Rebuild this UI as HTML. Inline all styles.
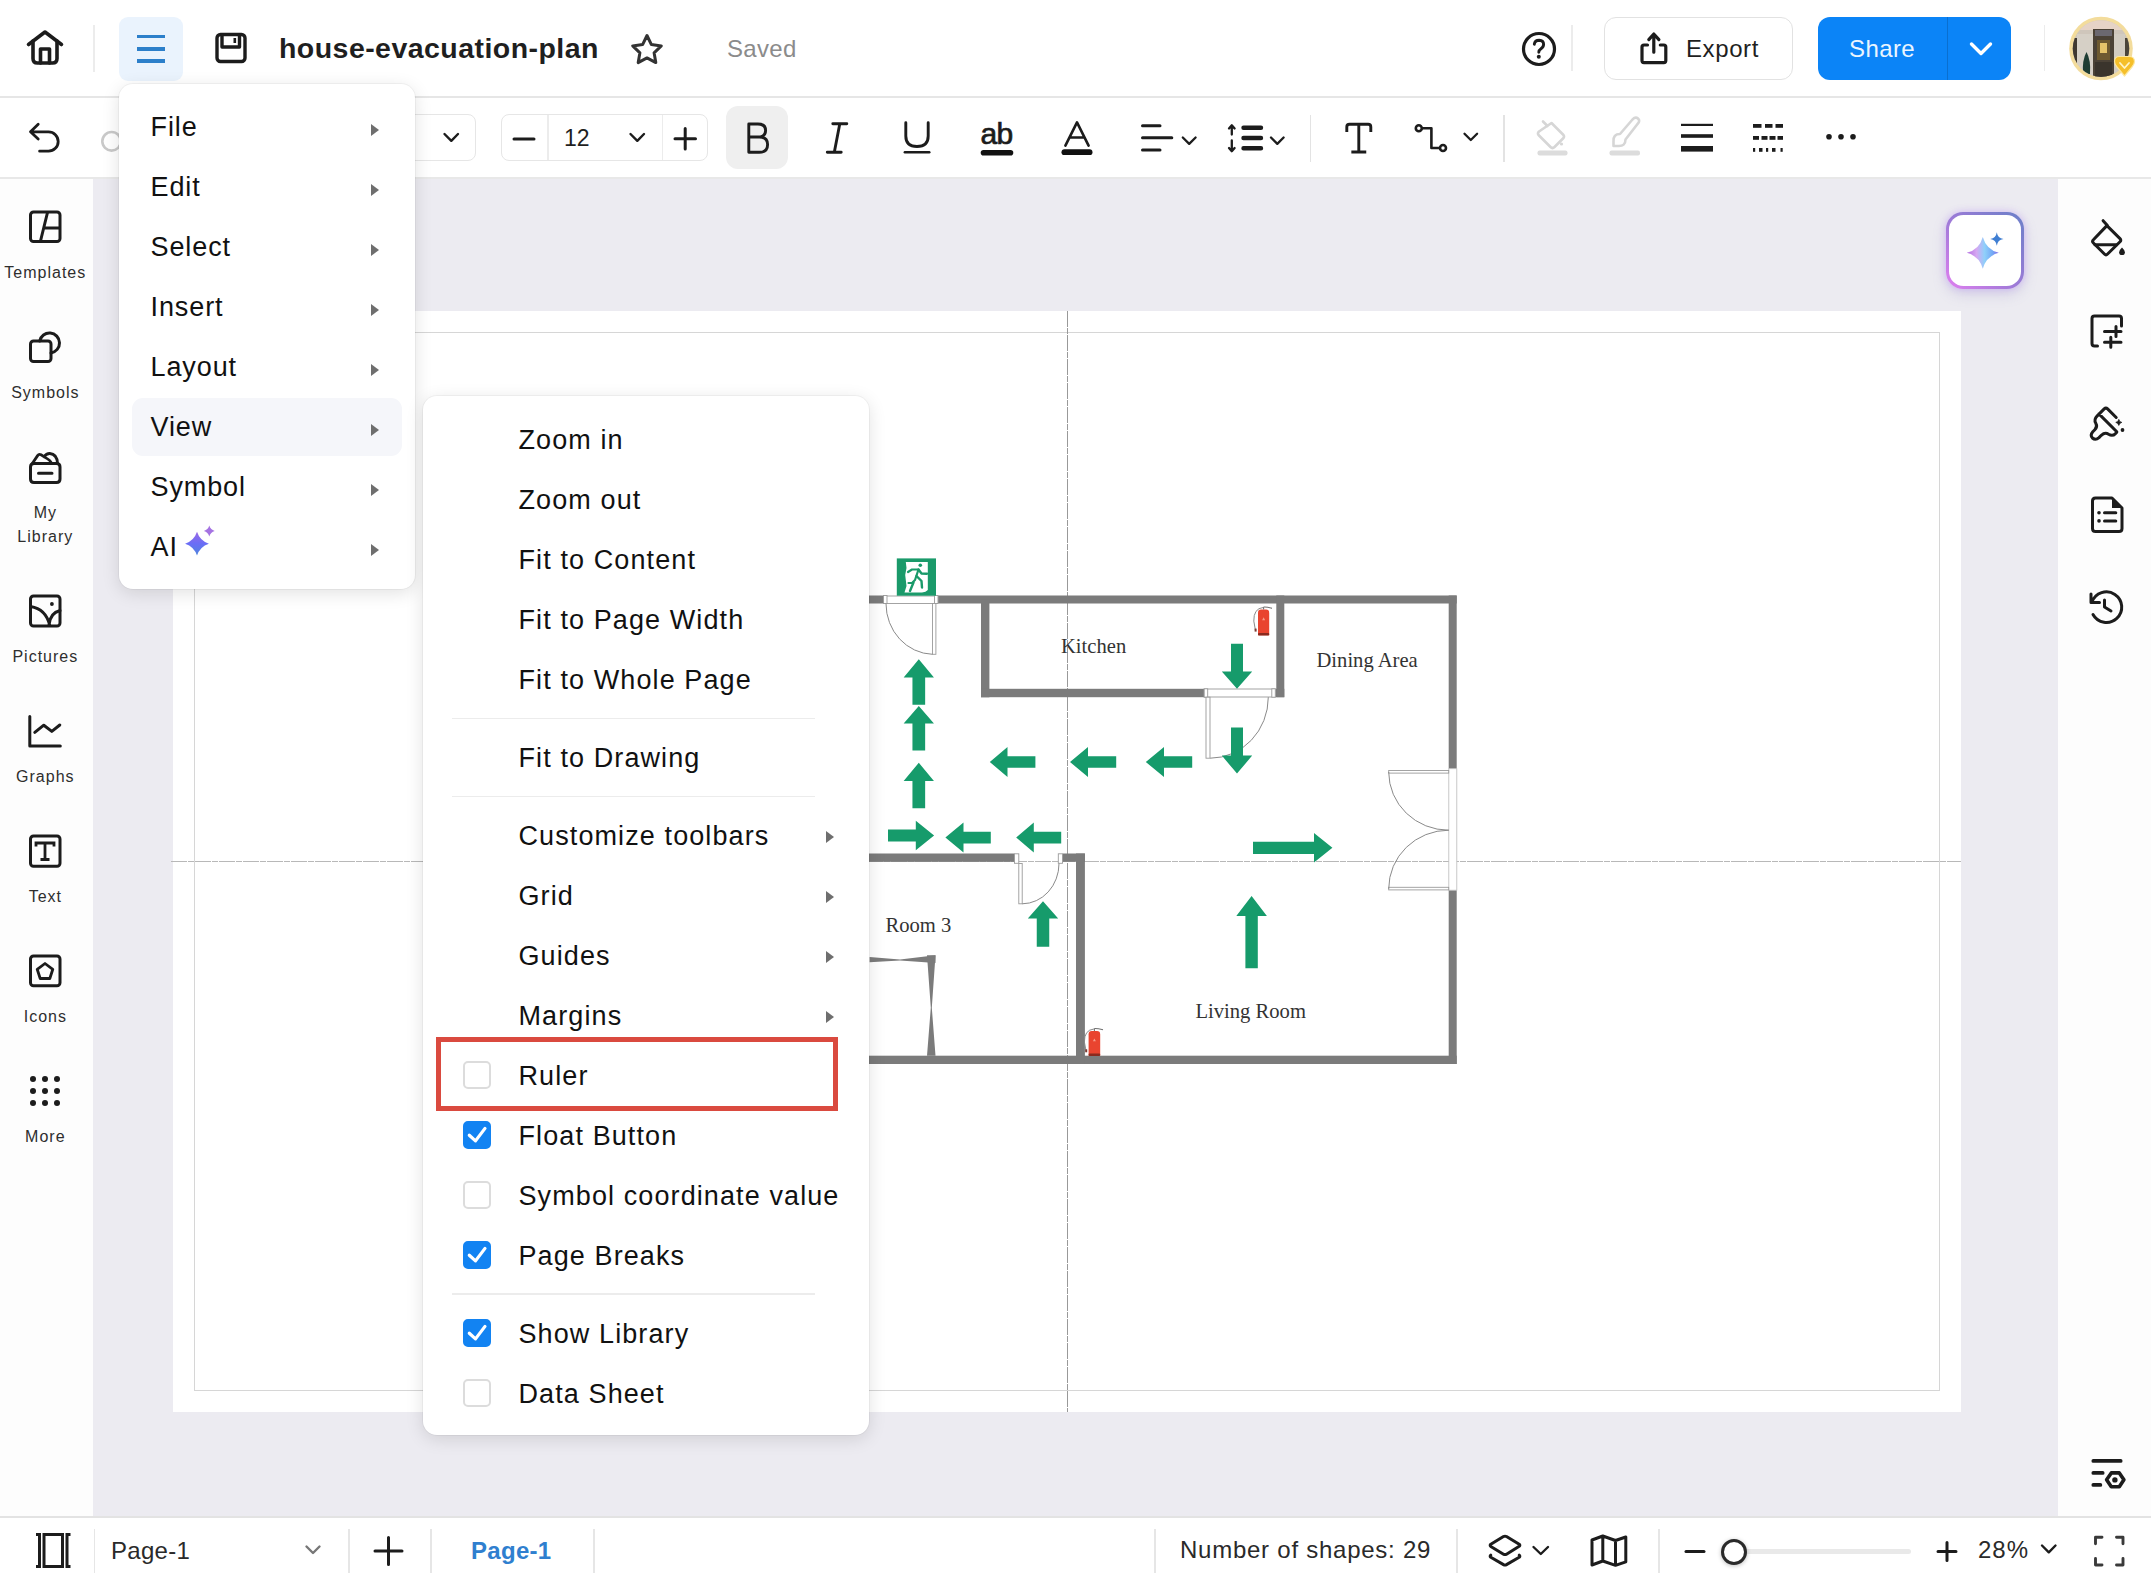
<!DOCTYPE html>
<html><head><meta charset="utf-8">
<style>
*{margin:0;padding:0;box-sizing:border-box}
html,body{width:2151px;height:1573px;overflow:hidden;background:#fff;font-family:"Liberation Sans",sans-serif;color:#1a1a1a}
.abs{position:absolute}
svg{position:absolute;overflow:visible}
.t{position:absolute;white-space:nowrap;line-height:1}
#topbar{position:absolute;left:0;top:0;width:2151px;height:98px;background:#fff;border-bottom:2px solid #e6e6e6}
#toolbar{position:absolute;left:0;top:98px;width:2151px;height:81px;background:#fff;border-bottom:2px solid #e8e8e8}
#leftbar{position:absolute;left:0;top:179px;width:93px;height:1338px;background:#fdfdfd}
#rightbar{position:absolute;left:2058px;top:179px;width:93px;height:1338px;background:#fdfdfd}
#canvas{position:absolute;left:93px;top:179px;width:1965px;height:1338px;background:#ecebf1}
#bottombar{position:absolute;left:0;top:1516px;width:2151px;height:57px;background:#fff;border-top:2px solid #e3e3e3}
.vsep{position:absolute;width:2px;background:#e8e8e8}
.menu{position:absolute;background:#fff;border-radius:14px;box-shadow:0 4px 18px rgba(0,0,0,0.12),0 0 0 1px rgba(0,0,0,0.04)}
.mi{position:absolute;font-size:27px;color:#111;line-height:1}
.arr{position:absolute;width:0;height:0;border-top:6px solid transparent;border-bottom:6px solid transparent;border-left:8px solid #6e6e6e}
.cb{position:absolute;width:28px;height:28px;border:2px solid #dcdcdc;border-radius:5px;background:#fff}
.cb.on{background:#1283f2;border-color:#1283f2}
.sep{position:absolute;height:2px;background:#ececec}
.lbl{position:absolute;font-size:16px;color:#2e2e2e;text-align:center;width:93px;left:-1.2px;line-height:24px;letter-spacing:1px}
</style></head>
<body>
<div id="topbar"></div>
<div id="toolbar"></div>
<div id="canvas"></div>
<div id="leftbar"></div>
<div id="rightbar"></div>
<div id="bottombar"></div>


<!-- TOPBAR -->
<svg style="left:0;top:0" width="1" height="1">
 <g fill="none" stroke="#1c1c1c" stroke-width="3.6" stroke-linejoin="round" stroke-linecap="round">
  <path d="M28.5 44.5 L45 32 L61.5 44.5"/>
  <path d="M33 41 V58.5 Q33 63 37.5 63 H52.5 Q57 63 57 58.5 V41"/>
  <path d="M40.5 63 V49 H49.5 V63"/>
 </g>
</svg>
<div class="vsep" style="left:93px;top:25px;height:47px;width:1.5px;background:#ececec"></div>
<div class="abs" style="left:119px;top:17px;width:64px;height:64px;border-radius:9px;background:#eaf3fd"></div>
<div class="abs" style="left:137px;top:34.8px;width:28px;height:3.6px;background:#2c7fca"></div>
<div class="abs" style="left:137px;top:47px;width:28px;height:3.6px;background:#2c7fca"></div>
<div class="abs" style="left:137px;top:59px;width:28px;height:3.6px;background:#2c7fca"></div>
<svg style="left:0;top:0" width="1" height="1">
 <g fill="none" stroke="#1c1c1c" stroke-width="3.4" stroke-linejoin="round">
  <rect x="217" y="34.5" width="28" height="27" rx="3.5"/>
  <path d="M222 34.5 V47 H239.5 V34.5"/>
 </g>
 <rect x="233.5" y="38" width="2.6" height="5" fill="#1c1c1c"/>
</svg>
<div class="t" style="left:279px;top:33.5px;font-size:28.5px;font-weight:bold;color:#1f1f1f;letter-spacing:0.45px">house-evacuation-plan</div>
<svg style="left:0;top:0" width="1" height="1">
 <path d="M647 35.5 L651.4 44.6 L661.3 45.9 L654.1 52.8 L655.8 62.6 L647 57.9 L638.2 62.6 L639.9 52.8 L632.7 45.9 L642.6 44.6 Z" fill="none" stroke="#333" stroke-width="3" stroke-linejoin="round"/>
</svg>
<div class="t" style="left:727px;top:37px;font-size:24px;color:#8b8b8b;letter-spacing:0.3px">Saved</div>

<svg style="left:0;top:0" width="1" height="1">
 <circle cx="1539" cy="49" r="15.5" fill="none" stroke="#1c1c1c" stroke-width="3.2"/>
 <path d="M1534.3 44.2 Q1534.8 40.2 1539.2 40.2 Q1543.6 40.3 1543.6 44.3 Q1543.6 47 1541 48.7 Q1538.8 50.2 1538.8 52.3" fill="none" stroke="#1c1c1c" stroke-width="2.9" stroke-linecap="round"/>
 <circle cx="1538.8" cy="56.8" r="2" fill="#1c1c1c"/>
</svg>
<div class="vsep" style="left:1571px;top:25px;height:46px;width:1.5px;background:#ececec"></div>
<div class="abs" style="left:1604px;top:17px;width:189px;height:63px;border:1.5px solid #e2e2e2;border-radius:12px;background:#fff"></div>
<svg style="left:0;top:0" width="1" height="1">
 <g fill="none" stroke="#1c1c1c" stroke-width="3.2" stroke-linecap="round" stroke-linejoin="round">
  <path d="M1647.5 45 H1644 Q1642 45 1642 47 V60.5 Q1642 62.6 1644 62.6 H1663.8 Q1665.8 62.6 1665.8 60.5 V47 Q1665.8 45 1663.8 45 H1660.3"/>
  <path d="M1653.8 52.2 V34.2 M1648.8 39.6 L1653.8 34 L1658.9 39.6"/>
 </g>
</svg>
<div class="t" style="left:1686px;top:37px;font-size:24px;color:#1f1f1f;letter-spacing:0.6px">Export</div>
<div class="abs" style="left:1818px;top:17px;width:193px;height:63px;border-radius:12px;background:#0b84f7"></div>
<div class="abs" style="left:1946.5px;top:17px;width:1.5px;height:63px;background:#0a6fd0"></div>
<div class="t" style="left:1849px;top:37px;font-size:24px;color:#eaf5ff;letter-spacing:0.4px">Share</div>
<svg style="left:0;top:0" width="1" height="1">
 <path d="M1971.5 44 L1981 53.5 L1990.5 44" fill="none" stroke="#fff" stroke-width="3.4" stroke-linecap="round" stroke-linejoin="round"/>
</svg>
<div class="vsep" style="left:2043.5px;top:25px;height:46px;width:1.5px;background:#ececec"></div>
<svg style="left:0;top:0" width="1" height="1">
 <defs>
  <clipPath id="av"><circle cx="2101" cy="48.5" r="28.3"/></clipPath>
 </defs>
 <circle cx="2101" cy="48.5" r="31.8" fill="#f3dc9c"/>
 <g clip-path="url(#av)">
  <rect x="2068" y="16" width="66" height="66" fill="#cfc6bb"/>
  <rect x="2068" y="16" width="66" height="14" fill="#e6d3c6"/>
  <rect x="2068" y="38" width="9" height="44" fill="#3f3830"/>
  <rect x="2125" y="38" width="9" height="44" fill="#4a443a"/>
  <rect x="2077" y="34" width="16" height="46" fill="#d6d0c6"/>
  <rect x="2110" y="34" width="15" height="46" fill="#d2ccc2"/>
  <rect x="2093" y="29" width="21" height="50" fill="#4b4236"/>
  <rect x="2095" y="30" width="17" height="6" fill="#6b6870"/>
  <rect x="2097" y="40" width="13" height="20" fill="#6e5a30"/>
  <rect x="2100" y="43" width="7" height="10" fill="#e5c46a"/>
  <rect x="2095" y="62" width="17" height="14" fill="#3a342c"/>
  <path d="M2083 74 Q2082 60 2086.5 52 Q2091 60 2090 74 Z" fill="#1f3d33"/>
  <rect x="2068" y="76" width="66" height="6" fill="#2e2b28"/>
 </g>
 <path d="M2114.5 61.5 Q2114.5 56.5 2119.5 56.5 L2129 56.5 Q2134.5 56.5 2134.5 61.5 Q2134.5 64 2132 67 L2124.5 76 L2117 67 Q2114.5 64 2114.5 61.5 Z" fill="#f5bf2a" stroke="#fde7a0" stroke-width="1.2" stroke-linejoin="round"/>
 <path d="M2120 63 L2124.5 68 L2129 63" fill="none" stroke="#fff4c8" stroke-width="1.8" stroke-linecap="round" stroke-linejoin="round"/>
</svg>


<!-- TOOLBAR -->
<svg style="left:0;top:0" width="1" height="1">
 <g fill="none" stroke="#1c1c1c" stroke-width="2.8" stroke-linecap="round" stroke-linejoin="round">
  <path d="M38.2 124.3 L30.5 131.8 L38.2 139.1 M30.5 131.8 H48.5 A9.7 9.7 0 0 1 48.5 151.2 H39.6"/>
 </g>
 <circle cx="111.6" cy="141.3" r="9.3" fill="none" stroke="#c9c9c9" stroke-width="2.6"/>
</svg>
<div class="abs" style="left:380px;top:114px;width:96px;height:47px;border:1.5px solid #e6e6e6;border-radius:8px;background:#fff"></div>
<div class="abs" style="left:501px;top:114px;width:207px;height:47px;border:1.5px solid #e6e6e6;border-radius:8px;background:#fff"></div>
<div class="abs" style="left:547px;top:115px;width:1.5px;height:45px;background:#ececec"></div>
<div class="abs" style="left:661.5px;top:115px;width:1.5px;height:45px;background:#ececec"></div>
<div class="t" style="left:564px;top:127px;font-size:23px;color:#1f1f1f">12</div>
<svg style="left:0;top:0" width="1" height="1">
 <g fill="none" stroke="#1c1c1c" stroke-width="2.4" stroke-linecap="round" stroke-linejoin="round">
  <path d="M444.5 134 L451.3 140.8 L458 134"/>
  <path d="M630.5 134 L637.3 140.8 L644 134"/>
 </g>
 <g fill="none" stroke="#1c1c1c" stroke-width="3" stroke-linecap="round">
  <path d="M514 139 H534"/>
  <path d="M675 138.8 H695.5 M685.2 128.5 V149"/>
 </g>
</svg>
<div class="abs" style="left:726px;top:106px;width:62px;height:63px;border-radius:12px;background:#efefef"></div>
<svg style="left:0;top:0" width="1" height="1">
 <g fill="none" stroke="#1c1c1c" stroke-width="2.9" stroke-linecap="round" stroke-linejoin="round">
  <!-- B -->
  <path d="M748.8 124 V152.3 H759.3 Q767.6 152.3 767.6 144.6 Q767.6 137 759.3 137 H748.8 M748.8 124 H757.8 Q765.6 124 765.6 130.5 Q765.6 137 757.8 137"/>
  <!-- I -->
  <path d="M832.8 123.8 H846.8 M827.3 152.3 H841.2 M839.8 123.8 L834.3 152.3"/>
  <!-- U -->
  <path d="M905.8 122.8 V136 Q905.8 146.5 917 146.5 Q928.2 146.5 928.2 136 V122.8"/>
  <path d="M904.8 152.3 H929.3" stroke-width="2.4"/>
  <!-- A -->
  <path d="M1065.4 145.7 L1077 122.3 L1088.6 145.7 M1069.6 137.5 H1084.4" stroke-width="2.6"/>
 </g>
 <path d="M983.5 152.8 H1010.5" stroke="#111" stroke-width="5.6" stroke-linecap="round"/>
 <path d="M1064.4 152.2 H1089.6" stroke="#111" stroke-width="5.8" stroke-linecap="round"/>
</svg>
<div class="t" style="left:980.5px;top:119px;font-size:30px;color:#1c1c1c;letter-spacing:-0.6px;-webkit-text-stroke:0.7px #1c1c1c">ab</div>
<svg style="left:0;top:0" width="1" height="1">
 <g fill="none" stroke="#1c1c1c" stroke-width="3" stroke-linecap="round" stroke-linejoin="round">
  <path d="M1142.5 125.8 H1160 M1142.5 137.8 H1171.8 M1142.5 150 H1160"/>
  <path d="M1182.8 137.5 L1189.2 143.9 L1195.6 137.5" stroke-width="2.3"/>
  <path d="M1271 137.5 L1277.3 143.9 L1283.6 137.5" stroke-width="2.3"/>
  <path d="M1464.5 133.7 L1470.8 140 L1477.1 133.7" stroke-width="2.3"/>
  <path d="M1231.8 125.5 V134.5 M1229 128.5 L1231.8 125.3 L1234.6 128.5 M1231.8 140.5 V151 M1229 148 L1231.8 151.2 L1234.6 148" stroke-width="2.3"/>
 </g>
 <g stroke="#1c1c1c" stroke-width="4.4" stroke-linecap="round">
  <path d="M1243.5 127.8 H1261 M1243.5 138 H1261 M1243.5 148.2 H1261"/>
 </g>
</svg>
<div class="abs" style="left:1309.5px;top:115px;width:1.5px;height:47px;background:#e3e3e3"></div>
<svg style="left:0;top:0" width="1" height="1">
 <g fill="none" stroke="#1c1c1c" stroke-width="2.9" stroke-linecap="square" stroke-linejoin="miter">
  <path d="M1346.8 130.5 V127 Q1346.8 124.3 1349.5 124.3 H1368.1 Q1370.8 124.3 1370.8 127 V130.5 M1358.8 124.3 V152 M1352.8 152 H1364.8"/>
 </g>
 <g fill="none" stroke="#1c1c1c" stroke-width="2.6" stroke-linejoin="round">
  <circle cx="1418.8" cy="128.2" r="3"/>
  <circle cx="1443" cy="148" r="3"/>
  <path d="M1421.8 128.2 H1431.4 V148 H1440"/>
 </g>
</svg>
<div class="abs" style="left:1503px;top:115px;width:1.5px;height:47px;background:#e3e3e3"></div>
<svg style="left:0;top:0" width="1" height="1">
 <g fill="none" stroke="#d6d6d6" stroke-width="2.6" stroke-linecap="round" stroke-linejoin="round">
  <path d="M1543 121.5 L1547.5 126 M1551.5 123 L1563 134.5 Q1565 136.5 1563 138.5 L1554.5 147 Q1552.5 149 1550.5 147 L1539 135.5 Q1537 133.5 1539 131.5 Z"/>
  <path d="M1637.5 124 Q1640.5 121 1638 118.5 Q1635.5 116.5 1632.5 119.5 L1620 134 Q1613 134 1613.5 141.5 L1613.5 146 L1618 146 Q1625.5 146.5 1625.5 139.5 Z"/>
 </g>
 <circle cx="1561.5" cy="144" r="1.6" fill="#d6d6d6"/>
 <rect x="1537.5" y="150.5" width="30" height="5" rx="2" fill="#dcdcdc"/>
 <rect x="1609.5" y="150.5" width="30.5" height="5" rx="2" fill="#dcdcdc"/>
 <rect x="1681" y="123.8" width="32" height="2.2" fill="#1c1c1c"/>
 <rect x="1681" y="134.2" width="32" height="3.6" fill="#1c1c1c"/>
 <rect x="1681" y="146" width="32" height="5.6" fill="#1c1c1c"/>
 <g fill="#1c1c1c">
  <rect x="1753" y="124" width="8.5" height="3.8"/><rect x="1765" y="124" width="7.5" height="3.8"/><rect x="1775.5" y="124" width="7.5" height="3.8"/>
  <rect x="1753" y="136" width="6" height="3.8"/><rect x="1761.5" y="136" width="6" height="3.8"/><rect x="1769.5" y="136" width="6" height="3.8"/><rect x="1777.5" y="136" width="5.5" height="3.8"/>
  <rect x="1753" y="148" width="2.2" height="3.8"/><rect x="1759" y="148" width="3.5" height="3.8"/><rect x="1766" y="148" width="2.2" height="3.8"/><rect x="1772" y="148" width="3.5" height="3.8"/><rect x="1780.5" y="148" width="2.2" height="3.8"/>
  <circle cx="1829" cy="136.8" r="2.8"/><circle cx="1841" cy="136.8" r="2.8"/><circle cx="1853" cy="136.8" r="2.8"/>
 </g>
</svg>


<!-- LEFT SIDEBAR -->
<svg style="left:0;top:0" width="1" height="1">
 <g fill="none" stroke="#1c1c1c" stroke-width="3" stroke-linecap="round" stroke-linejoin="round">
  <rect x="30.5" y="212" width="29.5" height="29.5" rx="3"/>
  <path d="M47.5 212.5 L40.5 241 M44.5 228 H59.5"/>
  <rect x="30.5" y="341" width="20.5" height="20.5" rx="3"/><path d="M39.7 341 A10 10 0 1 1 51 352.9"/>
  <path d="M34 463.5 Q30.5 463.5 30.5 467 V479 Q30.5 482.5 34 482.5 H56.5 Q60 482.5 60 479 V467 Q60 463.5 56.5 463.5 Z M38.5 473.3 H52"/>
  <path d="M32.3 463.5 L37.6 455.6 Q39 453.6 41 454.8 L45.5 457.6 Q50.8 460.6 51.5 463.5 M44 456.8 Q46.3 453.4 49.8 453.5 Q57 454 57.6 463.5" stroke-width="2.8"/>
  <rect x="30.5" y="596" width="29.5" height="30" rx="3"/>
  <path d="M30.5 606.5 Q46 609 49.8 625.5 M60 610.5 Q50 613 49 625"/>
  <path d="M29.8 716.5 V746 H60.3 M34.8 732.4 L43.8 725.2 L51.8 731.4 L59.8 725"/>
  <rect x="30.5" y="836" width="29.5" height="30.3" rx="3"/>
  <rect x="30.5" y="956" width="29.5" height="29.8" rx="3"/>
  <path d="M45 963.5 L52.8 969.3 L49.8 978.5 H40.2 L37.2 969.3 Z" stroke-width="2.8"/>
 </g>
 <circle cx="51.9" cy="604" r="1.9" fill="#1c1c1c"/>
 <g fill="none" stroke="#1c1c1c" stroke-width="2.8" stroke-linecap="butt">
  <path d="M36 846.5 V843 H54 V846.5 M45 843 V859.5 M40.5 859.5 H49.5"/>
 </g>
 <g fill="#1c1c1c">
  <circle cx="33" cy="1079" r="3"/><circle cx="45" cy="1079" r="3"/><circle cx="57" cy="1079" r="3"/>
  <circle cx="33" cy="1091" r="3"/><circle cx="45" cy="1091" r="3"/><circle cx="57" cy="1091" r="3"/>
  <circle cx="33" cy="1103" r="3"/><circle cx="45" cy="1103" r="3"/><circle cx="57" cy="1103" r="3"/>
 </g>
</svg>
<div class="lbl" style="top:260.5px">Templates</div>
<div class="lbl" style="top:380.5px">Symbols</div>
<div class="lbl" style="top:500.5px">My</div>
<div class="lbl" style="top:524.5px">Library</div>
<div class="lbl" style="top:644.5px">Pictures</div>
<div class="lbl" style="top:764.5px">Graphs</div>
<div class="lbl" style="top:884.5px">Text</div>
<div class="lbl" style="top:1004.5px">Icons</div>
<div class="lbl" style="top:1124.5px">More</div>

<!-- RIGHT SIDEBAR -->
<svg style="left:0;top:0" width="1" height="1">
 <g fill="none" stroke="#1c1c1c" stroke-width="3" stroke-linecap="round" stroke-linejoin="round">
  <path d="M2103.1 220.7 L2107.2 225.3"/>
  <path d="M2106.9 225.6 L2120 238.6 Q2121.6 240.2 2120 241.8 L2107.6 254 Q2106 255.6 2104.4 254 L2093.4 243 Q2091.8 241.4 2093.4 239.8 Z"/>
  <path d="M2095 244.7 H2116.4"/>
  <path d="M2103 316 H2094.5 Q2092 316 2092 318.5 V343.5 Q2092 346 2094.5 346 H2097.5 M2121.5 326 V318.5 Q2121.5 316 2119 316 H2103"/>
  <path d="M2104.5 331.5 H2121 M2104.5 342.3 H2121 M2116 326.5 V336.5 M2110.8 337.3 V347.3"/>
  <path d="M2116.2 417.5 L2107.6 408.9 Q2105.9 407.2 2104.2 408.9 L2097 416.1 Q2093.6 419.6 2095.8 423.3 Q2097.8 426.8 2094.8 429.8 L2092.8 431.8 Q2089.8 435.3 2092.4 438 Q2095.5 440.7 2099 437.6 L2101.3 435.3 Q2105 431.9 2108.6 434.3 Q2112.5 436.6 2115.5 433.6 L2116.8 432.2 M2098.9 413.9 L2116.8 431.8"/>
  <path d="M2095.5 498 H2112 L2122 508 V528.5 Q2122 531.5 2119 531.5 H2095.5 Q2092.5 531.5 2092.5 528.5 V501 Q2092.5 498 2095.5 498 Z"/>
  <path d="M2104.5 512.8 H2115.8 M2104.5 520.9 H2115.8"/>
  <path d="M2092 602 A15.3 15.3 0 1 1 2093 614.5 M2091 594 V602.5 H2099.5 M2104.5 600 V607 L2111 611"/>
 </g>
 <path d="M2112 498 L2122 508 H2112 Z" fill="#1c1c1c"/>
 <circle cx="2099" cy="512.8" r="1.8" fill="#1c1c1c"/><circle cx="2099" cy="520.9" r="1.8" fill="#1c1c1c"/>
 <path d="M2122 247.6 Q2124.9 250.4 2124.9 252.2 A2.9 2.9 0 0 1 2119.1 252.2 Q2119.1 250.4 2122 247.6 Z" fill="#1c1c1c"/>
 <path d="M2118.8 419.4 Q2119.2 422 2121.8 422.4 Q2119.2 422.8 2118.8 425.4 Q2118.4 422.8 2115.8 422.4 Q2118.4 422 2118.8 419.4 Z" fill="#1c1c1c" stroke="#1c1c1c" stroke-width="0.8"/><circle cx="2122.5" cy="430" r="1.9" fill="#1c1c1c"/>
 <g fill="none" stroke="#1c1c1c" stroke-width="3.2" stroke-linecap="round" stroke-linejoin="round">
  <path d="M2093.3 1460.9 H2120.7 M2093.3 1472.9 H2102.7 M2093.3 1484.9 H2100.4" stroke-width="3.7"/>
  <path d="M2106.6 1479.8 L2111.3 1472.9 H2119.3 L2123.9 1479.8 L2119.3 1486.8 H2111.3 Z" stroke-width="3.6"/>
 </g>
 <circle cx="2114.9" cy="1479.9" r="2.7" fill="#1c1c1c"/>
</svg>

<!-- BOTTOM BAR -->
<svg style="left:0;top:0" width="1" height="1">
 <g fill="none" stroke="#1c1c1c" stroke-width="3" stroke-linecap="butt">
  <path d="M36 1534.5 H39.5 V1566.5 H36"/>
  <path d="M70.5 1534.5 H67 V1566.5 H70.5"/>
  <rect x="44" y="1534.5" width="18.5" height="32"/>
 </g>
 <g fill="none" stroke="#1c1c1c" stroke-width="2.4" stroke-linecap="round" stroke-linejoin="round">
  <path d="M306.5 1546.5 L313 1553 L319.5 1546.5" stroke="#777"/>
  <path d="M1533.5 1547 L1540.8 1554 L1548 1547"/>
  <path d="M2042 1545.5 L2048.8 1552.3 L2055.5 1545.5"/>
 </g>
 <g fill="none" stroke="#1c1c1c" stroke-width="3" stroke-linecap="round" stroke-linejoin="round">
  <path d="M375 1551 H402 M388.5 1537.5 V1564.5"/>
  <path d="M1490.8 1546.5 Q1489.5 1545.3 1490.8 1544.3 L1503.5 1536.5 Q1505 1535.8 1506.5 1536.5 L1519.2 1544.3 Q1520.5 1545.3 1519.2 1546.3 L1506.5 1554.2 Q1505 1555 1503.5 1554.2 Z"/>
  <path d="M1490.8 1555.2 Q1489.5 1556.3 1490.8 1557.3 L1503.5 1564.6 Q1505 1565.4 1506.5 1564.6 L1519.2 1557.3 Q1520.5 1556.3 1519.2 1555.2" />
  <path d="M1592 1540 L1602.8 1536 L1615.5 1540.5 L1625.8 1537 V1561.8 L1615.5 1565.3 L1602.8 1561 L1592 1565 Z M1602.8 1536 V1561 M1615.5 1540.5 V1565.3"/>
  <path d="M1686 1551.5 H1704"/>
  <path d="M1938 1551.5 H1956 M1947 1542.5 V1560.5"/>
  <path d="M2095.5 1543.8 V1537.3 H2102 M2116.5 1537.3 H2123 V1543.8 M2123 1558.5 V1565 H2116.5 M2102 1565 H2095.5 V1558.5" stroke="#3a3a3a" stroke-width="2.9"/>
 </g>
</svg>
<div class="abs" style="left:93.5px;top:1529px;width:1.5px;height:44px;background:#e6e6e6"></div>
<div class="t" style="left:111px;top:1539px;font-size:24px;color:#2a2a2a;letter-spacing:0.3px">Page-1</div>
<div class="abs" style="left:348px;top:1529px;width:1.5px;height:44px;background:#e6e6e6"></div>
<div class="abs" style="left:430px;top:1529px;width:1.5px;height:44px;background:#e6e6e6"></div>
<div class="t" style="left:471px;top:1539px;font-size:24px;font-weight:bold;color:#2f7fcf;letter-spacing:0.3px">Page-1</div>
<div class="abs" style="left:593px;top:1529px;width:1.5px;height:44px;background:#e6e6e6"></div>
<div class="abs" style="left:1154px;top:1529px;width:1.5px;height:44px;background:#e6e6e6"></div>
<div class="t" style="left:1180px;top:1538px;font-size:24px;color:#2a2a2a;letter-spacing:0.75px">Number of shapes: 29</div>
<div class="abs" style="left:1456px;top:1529px;width:1.5px;height:44px;background:#e6e6e6"></div>
<div class="abs" style="left:1658px;top:1529px;width:1.5px;height:44px;background:#e6e6e6"></div>
<div class="abs" style="left:1725px;top:1548.5px;width:186px;height:5px;border-radius:3px;background:#e9e9e9"></div>
<div class="abs" style="left:1720.5px;top:1538.5px;width:26px;height:26px;border-radius:50%;background:#fff;border:3.2px solid #2a2a2a;box-shadow:0 1px 4px rgba(0,0,0,0.25)"></div>
<div class="t" style="left:1978px;top:1538px;font-size:24px;color:#2a2a2a;letter-spacing:1px">28%</div>

<!-- page -->
<div class="abs" style="left:173px;top:311px;width:1788px;height:1101px;background:#fff"></div>
<div class="abs" style="left:194px;top:332px;width:1746px;height:1059px;border:1px solid #d6d6d6"></div>


<!-- FLOOR PLAN -->
<svg style="left:0;top:0" width="1" height="1">
<path d="M1067.5 311 V1412" stroke="#999" stroke-width="1" stroke-dasharray="16 1 6 1" fill="none"/>
<path d="M171 861.5 H1961" stroke="#b8b8b8" stroke-width="1" stroke-dasharray="16 1 6 1" fill="none"/>
<rect x="700" y="595.5" width="183.4" height="8.0" fill="#7b7b7b"/>
<rect x="938.1" y="595.5" width="518.6" height="8.0" fill="#7b7b7b"/>
<rect x="1448.7" y="595.5" width="8.0" height="173.2" fill="#7b7b7b"/>
<rect x="1448.7" y="890.2" width="8.0" height="173.8" fill="#7b7b7b"/>
<rect x="700" y="1055.7" width="756.7" height="8.3" fill="#7b7b7b"/>
<rect x="981" y="599.6" width="8.4" height="97.7" fill="#7b7b7b"/>
<rect x="981" y="688.8" width="223.2" height="8.4" fill="#7b7b7b"/>
<rect x="1275.4" y="688.8" width="8.9" height="8.4" fill="#7b7b7b"/>
<rect x="1276.3" y="595.5" width="8.0" height="101.7" fill="#7b7b7b"/>
<rect x="700" y="853.5" width="314.5" height="8.3" fill="#7b7b7b"/>
<rect x="1062.5" y="853.5" width="22.4" height="8.3" fill="#7b7b7b"/>
<rect x="1076" y="853.5" width="8.9" height="210.5" fill="#7b7b7b"/>
<rect x="883.5" y="596" width="54" height="7.5" fill="#fff" stroke="#9a9a9a" stroke-width="0.9"/>
<rect x="883.5" y="595.5" width="3.5" height="8" fill="#fff" stroke="#9a9a9a" stroke-width="0.9"/><rect x="934.5" y="595.5" width="3.5" height="8" fill="#fff" stroke="#9a9a9a" stroke-width="0.9"/>
<rect x="932.5" y="603.5" width="3.4" height="50.8" fill="#fff" stroke="#9a9a9a" stroke-width="0.9"/>
<path d="M886 603.6 A48 50.7 0 0 0 932.5 654.3" fill="none" stroke="#8a8a8a" stroke-width="1"/>
<rect x="1204.2" y="689" width="71" height="8" fill="#fff" stroke="#9a9a9a" stroke-width="0.9"/>
<rect x="1204.2" y="688.8" width="3.5" height="8.4" fill="#fff" stroke="#9a9a9a" stroke-width="0.9"/><rect x="1271.8" y="688.8" width="3.5" height="8.4" fill="#fff" stroke="#9a9a9a" stroke-width="0.9"/>
<rect x="1206" y="697.2" width="4" height="61" fill="#fff" stroke="#9a9a9a" stroke-width="0.9"/>
<path d="M1268.3 697.2 A58.3 61 0 0 1 1210.2 758.2" fill="none" stroke="#8a8a8a" stroke-width="1"/>
<rect x="1014.5" y="853.8" width="4.3" height="9.5" fill="#fff" stroke="#9a9a9a" stroke-width="0.9"/><rect x="1058.3" y="853.8" width="4.2" height="9.5" fill="#fff" stroke="#9a9a9a" stroke-width="0.9"/>
<rect x="1018.8" y="863.5" width="3.4" height="40.3" fill="#fff" stroke="#9a9a9a" stroke-width="0.9"/>
<path d="M1059 863.5 A37 40.3 0 0 1 1022.2 903.8" fill="none" stroke="#8a8a8a" stroke-width="1"/>
<rect x="1448.8" y="768.7" width="8" height="121.5" fill="#fff" stroke="#bbb" stroke-width="0.8"/>
<rect x="1388.7" y="770.5" width="60" height="2.6" fill="#fff" stroke="#9a9a9a" stroke-width="0.9"/><rect x="1388.7" y="887.3" width="60" height="2.6" fill="#fff" stroke="#9a9a9a" stroke-width="0.9"/>
<path d="M1388.7 772 A60 58.2 0 0 0 1448.8 830.2 A60 58.6 0 0 0 1388.7 888.8" fill="none" stroke="#8a8a8a" stroke-width="1"/>
<path d="M869.6 957 L900 959.6 L935.5 955.3 V963 L900 960.6 L869.6 962.3 Z" fill="#7b7b7b"/>
<path d="M927 955.3 H935.5 L931.8 1007.7 L935.5 1055.7 H927 L930.8 1007.7 Z" fill="#7b7b7b"/>
<path d="M918.8 659.3 L933.9499999999999 677.4 H925.15 V704.7 H912.4499999999999 V677.4 H903.65 Z" fill="#169b6b"/>
<path d="M918.8 706.1 L933.9499999999999 723.5 H925.15 V750.4 H912.4499999999999 V723.5 H903.65 Z" fill="#169b6b"/>
<path d="M918.8 762.8 L933.9499999999999 780.9 H925.15 V808.2 H912.4499999999999 V780.9 H903.65 Z" fill="#169b6b"/>
<path d="M934.1 835.5 L915.8 820.85 V829.5 H888 V841.5 H915.8 V850.15 Z" fill="#169b6b"/>
<path d="M945.4 837.6 L963.5 822.6 V831.7 H990.8 V843.5 H963.5 V852.6 Z" fill="#169b6b"/>
<path d="M1016.2 837.6 L1033.8 822.6 V831.7 H1061.2 V843.5 H1033.8 V852.6 Z" fill="#169b6b"/>
<path d="M989.8 762 L1007.5 747.0 V756.2 H1035.4 V767.8 H1007.5 V777.0 Z" fill="#169b6b"/>
<path d="M1070 762 L1088 747.0 V756.2 H1116.2 V767.8 H1088 V777.0 Z" fill="#169b6b"/>
<path d="M1145.8 762 L1164 747.0 V756.2 H1192.2 V767.8 H1164 V777.0 Z" fill="#169b6b"/>
<path d="M1237 688.8 L1252.2 671.5 H1243.0 V643.8 H1231.0 V671.5 H1221.8 Z" fill="#169b6b"/>
<path d="M1237 773.6 L1252.2 755.6 H1243.0 V727.5 H1231.0 V755.6 H1221.8 Z" fill="#169b6b"/>
<path d="M1043 901.3 L1058.2 918.6 H1049.25 V946.8 H1036.75 V918.6 H1027.8 Z" fill="#169b6b"/>
<path d="M1251.6 896 L1266.8999999999999 916 H1257.8 V968.3 H1245.3999999999999 V916 H1236.3 Z" fill="#169b6b"/>
<path d="M1332.4 847.8 L1314 833.05 V841.6999999999999 H1253 V853.9 H1314 V862.55 Z" fill="#169b6b"/>
<rect x="896.8" y="558.4" width="39.2" height="37.3" fill="#1a9a6a"/>
<path d="M905.8 562 H927.8 V590 Q926 592.4 922 592.4 H904.5 L906.5 586 L905.2 575 L906.5 568 Z" fill="#fff"/>
<g fill="#1a9a6a" stroke="#1a9a6a" stroke-linecap="round" stroke-linejoin="round">
 <circle cx="920.3" cy="565.3" r="1.8" stroke="none"/>
 <path d="M908 572 L912 569.5 L918.5 569.5 L915 580 L912 583 L908.5 583" fill="none" stroke-width="2.2"/>
 <path d="M918.5 569.5 L921.5 573.5 L927 573.8 M916.5 576 L921.5 581 L922 587.5 M913.5 582.5 L910 591" fill="none" stroke-width="2.4"/>
</g>
<path d="M1258 612.7 Q1258 609.5 1261.2 609.5 H1266.0 Q1269.2 609.5 1269.2 612.7 V635.3 H1258 Z" fill="#e9442f"/><rect x="1258" y="633.0999999999999" width="11.2" height="2.4" rx="1" fill="#8a2a1e"/><path d="M1262.1 620.336 L1263.6 617.24 L1265.1 620.336 Z" fill="#f79a88"/><path d="M1263.6 609.5 V606.9 M1263.6 607.1 Q1266.6 606.9 1272.0 608.3" fill="none" stroke="#6f6f6f" stroke-width="1.1"/><path d="M1263.1 607.5 Q1253.5 608.5 1253.8 621.11 L1255.5 630.656" fill="none" stroke="#8a8a8a" stroke-width="1"/><rect x="1254.6" y="628.592" width="2" height="3" fill="#7a3a30"/>
<path d="M1088.6 1034.2 Q1088.6 1031 1091.8 1031 H1096.9999999999998 Q1100.1999999999998 1031 1100.1999999999998 1034.2 V1055.7 H1088.6 Z" fill="#e9442f"/><rect x="1088.6" y="1053.5" width="11.6" height="2.4" rx="1" fill="#8a2a1e"/><path d="M1092.8999999999999 1041.374 L1094.3999999999999 1038.41 L1095.8999999999999 1041.374 Z" fill="#f79a88"/><path d="M1094.3999999999999 1031 V1028.4 M1094.3999999999999 1028.6 Q1097.3999999999999 1028.4 1102.9999999999998 1029.8" fill="none" stroke="#6f6f6f" stroke-width="1.1"/><path d="M1093.8999999999999 1029 Q1084.1 1030 1084.3999999999999 1042.115 L1086.1 1051.254" fill="none" stroke="#8a8a8a" stroke-width="1"/><rect x="1085.1999999999998" y="1049.278" width="2" height="3" fill="#7a3a30"/>
</svg>
<div class="t" style="left:1061px;top:635.5px;font-family:'Liberation Serif',serif;font-size:20.6px;color:#333">Kitchen</div>
<div class="t" style="left:1316.5px;top:649.5px;font-family:'Liberation Serif',serif;font-size:20.6px;color:#333">Dining Area</div>
<div class="t" style="left:885.5px;top:914.5px;font-family:'Liberation Serif',serif;font-size:20.6px;color:#333">Room 3</div>
<div class="t" style="left:1195.5px;top:1000.5px;font-family:'Liberation Serif',serif;font-size:20.6px;color:#333">Living Room</div>


<!-- AI FLOAT -->
<div class="abs" style="left:1946px;top:212px;width:78px;height:77px;border-radius:17px;background:linear-gradient(45deg,#e07ff0 0%,#a07ad8 45%,#6a80c8 100%);box-shadow:0 0 7px rgba(190,140,255,0.45),0 5px 14px rgba(120,110,180,0.22)"></div>
<div class="abs" style="left:1948.8px;top:214.8px;width:72.4px;height:71.4px;border-radius:14.5px;background:#fff"></div>
<svg style="left:0;top:0" width="1" height="1">
 <defs>
  <linearGradient id="aig" x1="1967" y1="0" x2="1999" y2="0" gradientUnits="userSpaceOnUse">
   <stop offset="0" stop-color="#b46ee0"/><stop offset="0.3" stop-color="#d6a8f2"/><stop offset="0.55" stop-color="#8fd0fa"/><stop offset="0.8" stop-color="#74a8f5"/><stop offset="1" stop-color="#8a6ae8"/>
  </linearGradient>
 </defs>
 <path d="M1982.8 236.9 Q1986.2 249.4 1998.8 252.8 Q1986.2 256.2 1982.8 268.7 Q1979.3999999999999 256.2 1966.8 252.8 Q1979.3999999999999 249.4 1982.8 236.9 Z" fill="url(#aig)"/>
 <path d="M1996.8 232.2 Q1997.6 238.2 2003.5 239 Q1997.6 239.8 1996.8 245.8 Q1996 239.8 1990.2 239 Q1996 238.2 1996.8 232.2 Z" fill="#3f7ed2"/>
</svg>

<!-- MAIN MENU -->
<div class="menu" style="left:118.5px;top:84px;width:296.5px;height:505px"></div>
<div class="abs" style="left:131.5px;top:397.5px;width:270.5px;height:58.5px;border-radius:11px;background:#f5f6fa"></div>
<div class="mi" style="left:150.5px;top:114.0px;letter-spacing:0.9px">File</div>
<div class="arr" style="left:371px;top:123.5px"></div>
<div class="mi" style="left:150.5px;top:174.0px;letter-spacing:0.9px">Edit</div>
<div class="arr" style="left:371px;top:183.5px"></div>
<div class="mi" style="left:150.5px;top:234.0px;letter-spacing:0.9px">Select</div>
<div class="arr" style="left:371px;top:243.5px"></div>
<div class="mi" style="left:150.5px;top:294.0px;letter-spacing:0.9px">Insert</div>
<div class="arr" style="left:371px;top:303.5px"></div>
<div class="mi" style="left:150.5px;top:354.0px;letter-spacing:0.9px">Layout</div>
<div class="arr" style="left:371px;top:363.5px"></div>
<div class="mi" style="left:150.5px;top:414.0px;letter-spacing:0.9px">View</div>
<div class="arr" style="left:371px;top:423.5px"></div>
<div class="mi" style="left:150.5px;top:474.0px;letter-spacing:0.9px">Symbol</div>
<div class="arr" style="left:371px;top:483.5px"></div>
<div class="mi" style="left:150.5px;top:534.0px;letter-spacing:0.9px">AI</div>
<div class="arr" style="left:371px;top:543.5px"></div>
<svg style="left:0;top:0" width="1" height="1">
 <defs><linearGradient id="ais" x1="0" y1="0" x2="0" y2="1"><stop offset="0" stop-color="#9a6ae6"/><stop offset="0.5" stop-color="#6a6df6"/><stop offset="1" stop-color="#4d86dc"/></linearGradient></defs><path d="M197 531.8000000000001 Q199.9 540.8000000000001 208.9 543.7 Q199.9 546.6 197 555.6 Q194.1 546.6 185.1 543.7 Q194.1 540.8000000000001 197 531.8000000000001 Z" fill="url(#ais)"/>
 <path d="M209.3 525.6 Q210.60000000000002 529.7 214.70000000000002 531 Q210.60000000000002 532.3 209.3 536.4 Q208.0 532.3 203.9 531 Q208.0 529.7 209.3 525.6 Z" fill="#a573e2"/>
</svg>
<!-- VIEW SUBMENU -->
<div class="menu" style="left:422.5px;top:395.5px;width:446px;height:1039.5px"></div>
<div class="mi" style="left:518.5px;top:426.7px;letter-spacing:1.1px">Zoom in</div>
<div class="mi" style="left:518.5px;top:486.7px;letter-spacing:1.1px">Zoom out</div>
<div class="mi" style="left:518.5px;top:546.7px;letter-spacing:1.1px">Fit to Content</div>
<div class="mi" style="left:518.5px;top:606.7px;letter-spacing:1.1px">Fit to Page Width</div>
<div class="mi" style="left:518.5px;top:666.7px;letter-spacing:1.1px">Fit to Whole Page</div>
<div class="mi" style="left:518.5px;top:744.7px;letter-spacing:1.1px">Fit to Drawing</div>
<div class="mi" style="left:518.5px;top:822.7px;letter-spacing:1.1px">Customize toolbars</div>
<div class="arr" style="left:825.5px;top:830.9px"></div>
<div class="mi" style="left:518.5px;top:882.7px;letter-spacing:1.1px">Grid</div>
<div class="arr" style="left:825.5px;top:890.9px"></div>
<div class="mi" style="left:518.5px;top:942.7px;letter-spacing:1.1px">Guides</div>
<div class="arr" style="left:825.5px;top:950.9px"></div>
<div class="mi" style="left:518.5px;top:1002.7px;letter-spacing:1.1px">Margins</div>
<div class="arr" style="left:825.5px;top:1010.9px"></div>
<div class="mi" style="left:518.5px;top:1062.7px;letter-spacing:1.1px">Ruler</div>
<div class="cb" style="left:463px;top:1061.4px;width:27.5px;height:27.5px"></div>
<div class="mi" style="left:518.5px;top:1122.7px;letter-spacing:1.1px">Float Button</div>
<div class="cb on" style="left:463px;top:1121.4px;width:27.5px;height:27.5px"></div>
<svg style="left:0;top:0" width="1" height="1"><path d="M469.3 1135.2 L475.5 1140.9 L485 1128.4" fill="none" stroke="#fff" stroke-width="3.2" stroke-linecap="round" stroke-linejoin="round"/></svg>
<div class="mi" style="left:518.5px;top:1182.7px;letter-spacing:1.1px">Symbol coordinate value</div>
<div class="cb" style="left:463px;top:1181.4px;width:27.5px;height:27.5px"></div>
<div class="mi" style="left:518.5px;top:1242.7px;letter-spacing:1.1px">Page Breaks</div>
<div class="cb on" style="left:463px;top:1241.4px;width:27.5px;height:27.5px"></div>
<svg style="left:0;top:0" width="1" height="1"><path d="M469.3 1255.2 L475.5 1260.9 L485 1248.4" fill="none" stroke="#fff" stroke-width="3.2" stroke-linecap="round" stroke-linejoin="round"/></svg>
<div class="mi" style="left:518.5px;top:1320.7px;letter-spacing:1.1px">Show Library</div>
<div class="cb on" style="left:463px;top:1319.4px;width:27.5px;height:27.5px"></div>
<svg style="left:0;top:0" width="1" height="1"><path d="M469.3 1333.2 L475.5 1338.9 L485 1326.4" fill="none" stroke="#fff" stroke-width="3.2" stroke-linecap="round" stroke-linejoin="round"/></svg>
<div class="mi" style="left:518.5px;top:1380.7px;letter-spacing:1.1px">Data Sheet</div>
<div class="cb" style="left:463px;top:1379.4px;width:27.5px;height:27.5px"></div>
<div class="sep" style="left:451.5px;top:717.5px;width:363px;height:1.5px"></div>
<div class="sep" style="left:451.5px;top:795.5px;width:363px;height:1.5px"></div>
<div class="sep" style="left:451.5px;top:1293px;width:363px;height:1.5px"></div>
<div class="abs" style="left:436px;top:1036.5px;width:402px;height:74.5px;border:5.5px solid #da4a3f"></div>

</body></html>
